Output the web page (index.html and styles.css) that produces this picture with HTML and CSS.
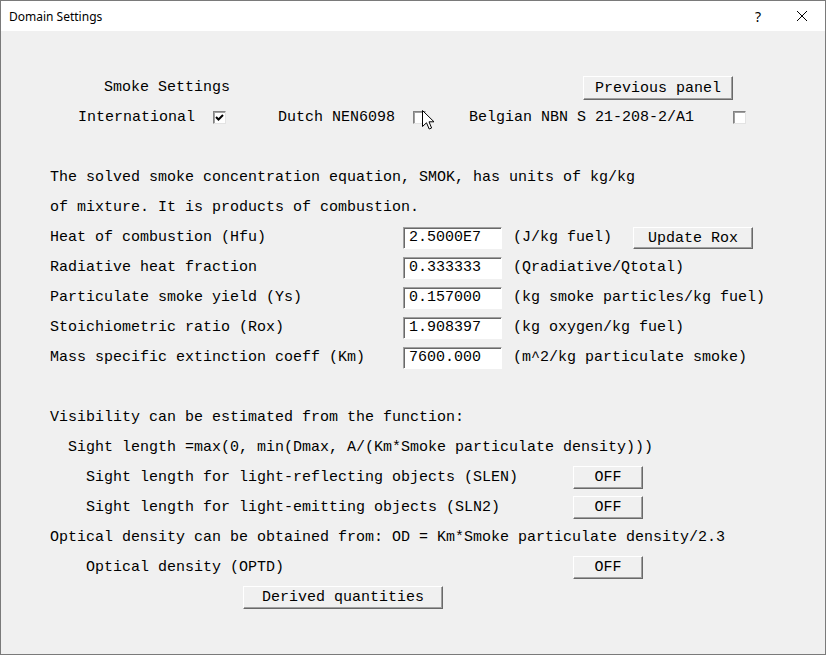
FILE: index.html
```html
<!DOCTYPE html>
<html lang="en">
<head>
    <meta charset="UTF-8">
    <title>Domain Settings</title>
    <link rel="stylesheet" href="styles.css">
</head>
<body>
    <div class="window">
        <div class="titlebar">
            <span class="title">Domain Settings</span>
            <span class="help">?</span>
            <span class="close">
                <svg width="12" height="12" viewBox="0 0 12 12"><path d="M1 1 L11 11 M11 1 L1 11" stroke="#000" stroke-width="1" fill="none"/></svg>
            </span>
        </div>

        <div class="content">
            <div class="row">
                <span class="heading">Smoke Settings</span>
                <button class="btn btn-prev">Previous panel</button>
            </div>
            <div class="row">
                <span class="opt opt-intl">International</span>
                <span class="check"><svg width="11" height="11" viewBox="0 0 11 11"><path d="M2 5 L4.5 7.5 L9 3" stroke="#000" stroke-width="2" fill="none"/></svg></span>
                <span class="opt opt-dutch">Dutch NEN6098</span>
                <span class="check"></span>
                <span class="opt opt-belg">Belgian NBN S 21-208-2/A1</span>
                <span class="check check-belg"></span>
            </div>
            <div class="row"></div>

            <div class="row">The solved smoke concentration equation, SMOK, has units of kg/kg</div>
            <div class="row">of mixture. It is products of combustion.</div>
            <div class="row">
                <span class="label">Heat of combustion (Hfu)</span>
                <span class="field">2.5000E7</span>
                <span class="unit">(J/kg fuel)</span>
                <button class="btn btn-rox">Update Rox</button>
            </div>
            <div class="row">
                <span class="label">Radiative heat fraction</span>
                <span class="field">0.333333</span>
                <span class="unit">(Qradiative/Qtotal)</span>
            </div>
            <div class="row">
                <span class="label">Particulate smoke yield (Ys)</span>
                <span class="field">0.157000</span>
                <span class="unit">(kg smoke particles/kg fuel)</span>
            </div>
            <div class="row">
                <span class="label">Stoichiometric ratio (Rox)</span>
                <span class="field">1.908397</span>
                <span class="unit">(kg oxygen/kg fuel)</span>
            </div>
            <div class="row">
                <span class="label">Mass specific extinction coeff (Km)</span>
                <span class="field">7600.000</span>
                <span class="unit">(m^2/kg particulate smoke)</span>
            </div>
            <div class="row"></div>

            <div class="row">Visibility can be estimated from the function:</div>
            <div class="row indent-1">Sight length =max(0, min(Dmax, A/(Km*Smoke particulate density)))</div>
            <div class="row indent-2">
                <span class="switch-label">Sight length for light-reflecting objects (SLEN)</span>
                <button class="btn btn-off">OFF</button>
            </div>
            <div class="row indent-2">
                <span class="switch-label">Sight length for light-emitting objects (SLN2)</span>
                <button class="btn btn-off">OFF</button>
            </div>
            <div class="row">Optical density can be obtained from: OD = Km*Smoke particulate density/2.3</div>
            <div class="row indent-2">
                <span class="switch-label">Optical density (OPTD)</span>
                <button class="btn btn-off">OFF</button>
            </div>
            <div class="row">
                <button class="btn btn-derived">Derived quantities</button>
            </div>
        </div>
    </div>

    <svg class="cursor" width="13" height="20" viewBox="0 0 13 20">
        <path d="M0.5 0.5 L0.5 16.5 L4.5 12.8 L7.2 19 L9.6 18 L7 11.8 L12 11.8 Z" fill="#fff" stroke="#000" stroke-width="1" stroke-linejoin="miter"/>
    </svg>
</body>
</html>
```

FILE: styles.css
```css
* { box-sizing: border-box; }
body { margin: 0; background: #f0f0f0; color: #000; font-family: "Liberation Mono", "DejaVu Sans Mono", monospace; font-size: 15px; }

.window { position: relative; width: 826px; height: 655px; border: 1px solid #7a7a7a; background: #f0f0f0; }

/* title bar */
.titlebar { display: flex; align-items: center; height: 30px; padding-left: 8px; background: #fff; font-family: "Noto Sans", "Open Sans", sans-serif; font-size: 12px; }
.title { flex: 1; }
.help { width: 42px; text-align: center; font-size: 14px; }
.close { display: flex; justify-content: center; width: 46px; }

/* body rows, 30px each */
.content { padding: 41px 0 0 49px; }
.row { display: flex; align-items: center; height: 30px; white-space: pre; }
.indent-1 { padding-left: 18px; }
.indent-2 { padding-left: 36px; }

.heading { width: 126px; margin-left: 54px; }
.opt { width: 117px; }
.opt-intl { margin-left: 28px; }
.opt-dutch { margin-left: 52px; }
.opt-belg { width: 225px; margin-left: 43px; }

.check { display: flex; align-items: center; justify-content: center; width: 13px; height: 13px; margin-left: 18px; background: #fff; border: 1px solid; border-color: #828282 #e3e3e3 #e3e3e3 #828282; box-shadow: inset 1px 1px 0 #a0a0a0; }
.check-belg { margin-left: 39px; }

.label { width: 353px; }
.field { width: 99px; height: 22px; margin-top: 2px; padding: 0 0 0 5px; line-height: 19px; background: #fff; border: 1px solid; border-color: #a0a0a0 #fff #fff #a0a0a0; box-shadow: inset 1px 1px 0 #696969; }
.unit { width: 120px; margin-left: 11px; }

.switch-label { width: 487px; }

/* classic raised buttons */
.btn { padding: 0; font: inherit; color: #000; background: #f0f0f0; border: 1px solid; border-color: #fff #696969 #696969 #fff; box-shadow: inset -1px -1px 0 #a0a0a0; }
.btn-prev { width: 150px; height: 24px; margin: 2px 0 0 353px; }
.btn-rox { width: 120px; height: 22px; margin-top: 2px; }
.btn-off { width: 70px; height: 23px; }
.btn-derived { width: 200px; height: 23px; margin: 1px 0 0 193px; }

.cursor { position: absolute; left: 422px; top: 110px; }
```
